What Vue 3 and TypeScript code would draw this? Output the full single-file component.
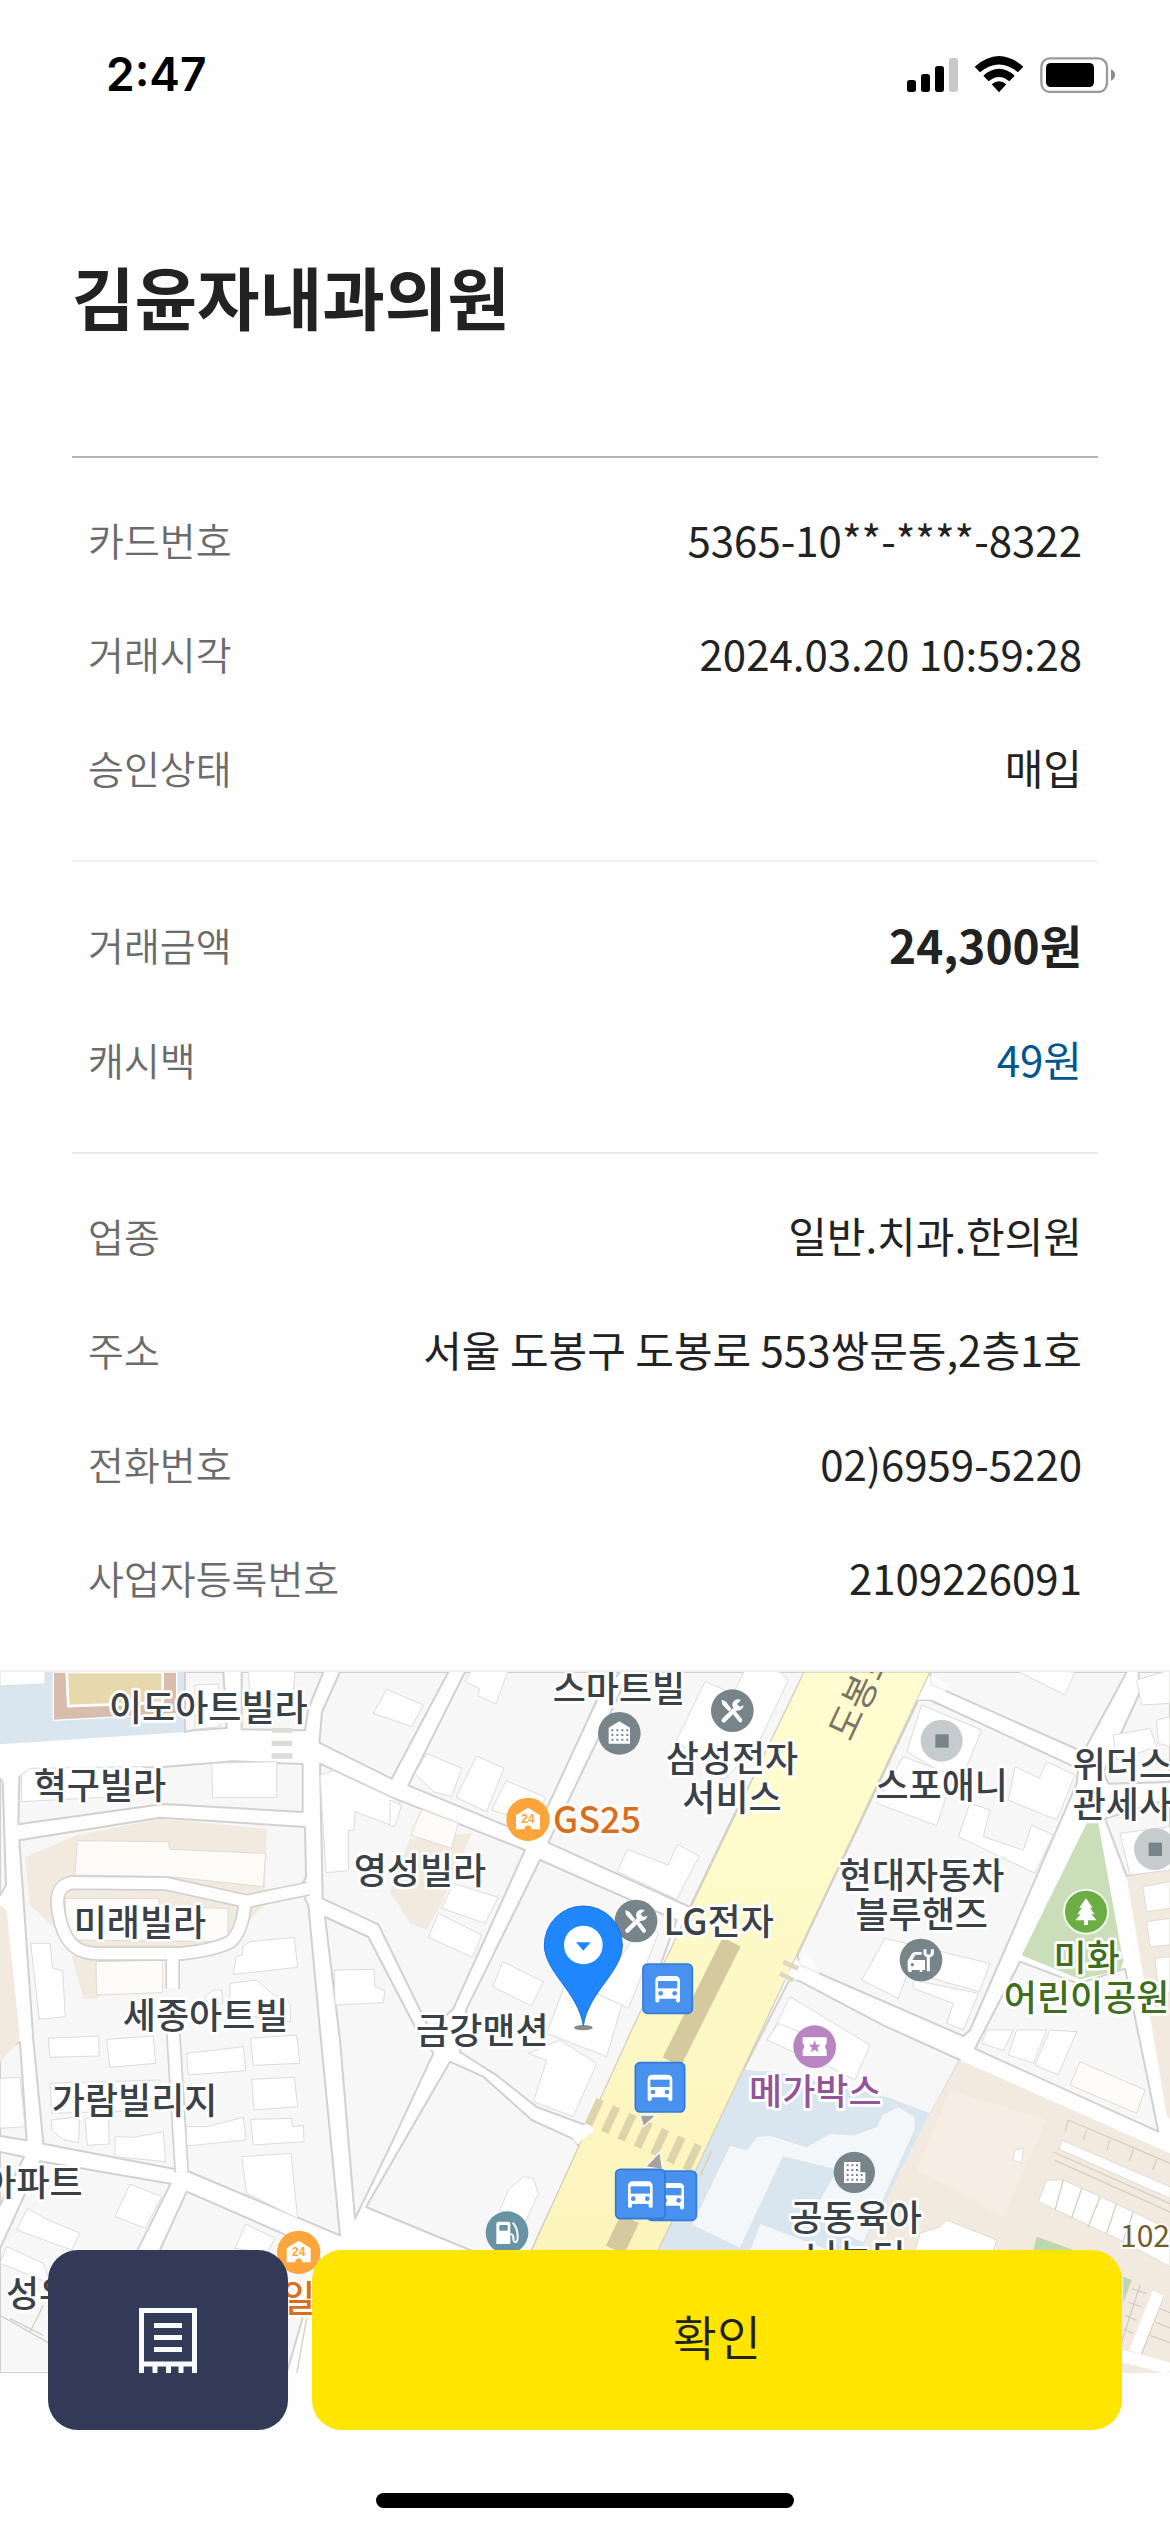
<script setup lang="ts">
interface Row {
  label: string
  value: string
  tone?: 'amount' | 'cashback'
}

interface MapLabel {
  x: number
  y: number
  lines: string[]
  tone?: string
  anchor?: 'start' | 'middle' | 'end'
}

interface Tile {
  x: number
  y: number
  shapes: string[]
}

interface Poi {
  icon: string
  x: number
  y: number
}

const store = '김윤자내과의원'

const sections: Row[][] = [
  [
    { label: '카드번호', value: '5365-10**-****-8322' },
    { label: '거래시각', value: '2024.03.20 10:59:28' },
    { label: '승인상태', value: '매입' },
  ],
  [
    { label: '거래금액', value: '24,300원', tone: 'amount' },
    { label: '캐시백', value: '49원', tone: 'cashback' },
  ],
  [
    { label: '업종', value: '일반.치과.한의원' },
    { label: '주소', value: '서울 도봉구 도봉로 553쌍문동,2층1호' },
    { label: '전화번호', value: '02)6959-5220' },
    { label: '사업자등록번호', value: '2109226091' },
  ],
]

/* City blocks; whatever is left between them reads as road. */
const blocks: string[] = [
  '555,0 670,0 680,168 580,175 555,180',
  '725,0 970,0 925,110 915,175 725,172',
  '0,320 8,330 18,640 0,670',
  '58,315 85,298 490,285 700,268 908,276 908,420 490,396 55,457',
  '58,505 480,437 915,465 918,615 905,640 915,680 925,700 960,1074 1020,1690 570,1500 130,1415 100,1104',
  '1020,0 1345,0 1175,320 958,212 966,120',
  '1395,0 1860,0 1795,75 1640,410 1600,492 1510,458 1225,340',
  '1890,0 2415,0 2370,104 2200,434 2070,705 1645,512',
  '960,275 1170,374 1575,534 1360,1010 1290,1075 1190,870 1135,757 968,680',
  '975,735 1105,795 1250,1074 1300,1144 1170,1424 1065,1640 1020,1104',
  '1620,564 2030,745 1900,1104 1765,1362 1610,1305 1490,1210 1380,1140 1400,1010',
  '1350,1169 1450,1214 1595,1344 1722,1402 1738,1425 1595,1734 1540,1800 1410,1734 1098,1605',
  '0,1140 60,1110 80,1405 0,1392',
  '0,1440 72,1455 0,1600',
  '120,1468 512,1535 400,1760 500,2103 0,2103 0,1730',
  '560,1559 860,1690 960,1760 860,2103 400,2103 480,1734',
  '2790,0 3380,0 3250,240 2795,38',
  '2755,84 2790,84 3235,290 3230,335 2910,1074 2890,1092 2400,879 2392,850',
  '3415,0 3510,0 3510,330 3325,335 3310,300 3420,60',
  '3060,869 3235,935 3375,890 3475,1379 2925,1130',
  '3315,440 3510,380 3510,600 3380,612',
  '2370,920 2400,928 2650,1060 2880,1164 2790,1330 2600,1290 2230,1194',
]

const beige: string[] = [
  '75,555 230,490 480,440 800,470 795,700 640,840 230,830 90,700',
  '215,850 400,870 290,980 250,980',
  '0,700 20,715 60,1104 0,1170',
  '1170,660 1230,500 1415,484 1330,684 1280,774 1230,754',
  '3380,615 3510,590 3510,1340 3500,1330',
  '2880,1164 3510,1444 3510,2103 2500,2103 2570,1734 2700,1500 2790,1324',
]

/* Building footprints, grouped by the tile they belong to. */
const tiles: Tile[] = [
  {
    x: 0,
    y: -36,
    shapes: [
      '0,30 135,30 135,72 0,78',
      '585,75 655,72 660,200 585,208',
      '745,30 885,30 880,95 750,110',
      '1160,88 1270,135 1235,200 1120,160',
      '635,310 830,305 830,412 638,412',
      '65,345 90,325 430,320 440,405 65,425',
      '92,850 150,850 158,925 188,932 196,1070 118,1078',
      '728,860 750,845 883,832 893,922 700,943 708,890 728,885',
      '690,970 770,960 815,1000 870,1030 872,1085 690,1060',
      '615,1010 640,990 665,990 668,1030 615,1030',
      '960,345 1000,332 1200,425 1180,498 1065,455 1062,510 1045,512 1045,632 978,638',
      '1003,930 1122,928 1125,980 1155,992 1150,1028 1005,1035',
    ],
  },
  {
    x: 1170,
    y: -36,
    shapes: [
      '225,65 245,30 355,30 318,132 265,108 268,85',
      '110,280 215,325 185,410 130,395 75,340',
      '260,288 342,325 290,455 198,412',
      '348,362 468,412 430,490 305,450',
      '0,420 35,435 15,498 0,498',
      '190,670 325,712 285,790 155,745',
      '145,760 275,825 248,892 115,832',
      '338,905 460,965 425,1038 308,980',
      '712,568 835,615 862,553 928,588 860,718 682,635',
      '945,65 1030,100 1065,30 1170,36 1195,60 1100,260 1000,360 860,240',
      '760,790 805,820 715,1045 620,1000',
      '530,960 695,1035 650,1190 470,1120',
    ],
  },
  {
    x: 2310,
    y: -36,
    shapes: [
      '455,135 635,210 570,370 410,275',
      '400,290 550,345 500,497 320,430',
      '600,430 660,450 640,530 760,570 785,495 850,525 795,640 565,530',
      '735,320 808,355 830,305 915,345 860,480 715,420',
      '735,30 915,36 885,105',
      '1100,60 1200,30 1200,130 1115,135',
      '1030,225 1140,205 1160,260 1040,300',
      '1160,180 1200,170 1200,260 1165,250',
      '1050,520 1200,500 1200,630 1080,645',
      '1118,680 1200,665 1200,745 1130,755',
      '1130,785 1200,775 1200,855 1140,860',
      '1155,895 1200,890 1200,1000 1165,990',
      '345,835 660,910 628,995 415,935 385,1015 275,960',
      '430,960 625,1000 580,1110 530,1090 550,1030 430,985',
      '60,1010 300,1155 255,1260 0,1130',
    ],
  },
  {
    x: 0,
    y: 1074,
    shapes: [
      '145,25 295,18 298,78 150,82',
      '320,28 460,18 467,100 330,112',
      '560,70 730,50 737,122 565,135',
      '752,25 890,15 900,100 760,106',
      '755,148 883,142 893,230 762,240',
      '557,290 620,290 730,262 738,330 560,348',
      '752,268 875,265 877,290 910,287 912,335 760,345',
      '150,160 480,150 482,240 155,250',
      '155,270 238,260 236,338 190,330 155,300',
      '255,265 325,262 328,342 262,346',
      '345,320 400,322 490,305 497,395 345,380',
      '725,380 873,370 893,565 740,490',
      '390,462 485,500 435,595 345,560',
      '82,535 145,570 240,610 215,660 50,600',
      '20,650 130,700 150,760 0,700',
      '738,582 825,625 800,670 705,655',
      '0,145 60,142 75,290 0,295',
    ],
  },
  {
    x: 1170,
    y: 1074,
    shapes: [
      '470,92 415,70 510,30 620,100 550,260 430,215',
      '400,440 430,445 445,490 405,580 330,540 355,480',
      '1165,-20 1240,10 1220,70 1130,30',
    ],
  },
  {
    x: 2310,
    y: 1074,
    shapes: [
      '530,570 680,630 665,680 430,680 450,610 510,590',
      '650,0 730,0 700,62 635,40',
      '740,0 830,0 790,100 715,75',
      '840,0 920,5 865,135 795,105',
      '735,360 760,355 755,400 728,390',
      '875,330 1200,470 1200,505 868,358',
      '830,450 880,450 1090,545 1200,600 1200,710 1050,630 805,515',
    ],
  },
]

const labels: MapLabel[] = [
  { x: 625, y: 147, lines: ['이도아트빌라'] },
  { x: 300, y: 380, lines: ['혁구빌라'] },
  { x: 420, y: 792, lines: ['미래빌라'] },
  { x: 617, y: 1070, lines: ['세종아트빌'] },
  { x: 1260, y: 635, lines: ['영성빌라'] },
  { x: 1857, y: 90, lines: ['스마트빌'] },
  { x: 2196, y: 299, lines: ['삼성전자', '서비스'] },
  { x: 1791, y: 484, lines: ['GS25'], tone: 'orange' },
  { x: 2156, y: 788, lines: ['LG전자'] },
  { x: 1447, y: 1115, lines: ['금강맨션'] },
  { x: 2825, y: 382, lines: ['스포애니'] },
  { x: 2765, y: 650, lines: ['현대자동차', '블루핸즈'] },
  { x: 3218, y: 319, lines: ['위더스', '관세사'], anchor: 'start' },
  { x: 3260, y: 898, lines: ['미화', '어린이공원'], tone: 'green' },
  { x: 404, y: 1325, lines: ['가람빌리지'] },
  { x: 248, y: 1571, lines: ['아파트'], anchor: 'end' },
  { x: 18, y: 1904, lines: ['성우'], anchor: 'start' },
  { x: 896, y: 1921, lines: ['일'], tone: 'orange' },
  { x: 2446, y: 1300, lines: ['메가박스'], tone: 'purple' },
  { x: 2567, y: 1678, lines: ['공동육아', '나눔터'] },
]

const pois: Poi[] = [
  { icon: 'house', x: 1858, y: 184 },
  { icon: 'tools', x: 2197, y: 116 },
  { icon: 'store', x: 1584, y: 442 },
  { icon: 'tools', x: 1908, y: 747 },
  { icon: 'place', x: 2825, y: 206 },
  { icon: 'place', x: 3465, y: 531 },
  { icon: 'garage', x: 2763, y: 864 },
  { icon: 'tree', x: 3258, y: 719 },
  { icon: 'ticket', x: 2444, y: 1124 },
  { icon: 'office', x: 2563, y: 1501 },
  { icon: 'fuel', x: 1521, y: 1682 },
  { icon: 'store', x: 896, y: 1741 },
  { icon: 'bus', x: 2003, y: 950 },
  { icon: 'bus', x: 1980, y: 1246 },
  { icon: 'bus', x: 2015, y: 1571 },
  { icon: 'bus', x: 1921, y: 1566 },
]

const loopRoad =
  'M925,650 L740,688 L500,635 L215,632 Q172,640 172,690 Q180,790 225,825 Q250,845 300,845 L540,845 Q640,835 690,810 Q728,780 735,690 M518,850 V950'
const sideRoad = 'M520,1085 L545,1500'
const terraceLines =
  'M880,450 L855,540 M935,475 L905,565 M990,500 L955,590 M1040,520 L1010,610 M1090,545 L1060,632 M950,300 L940,330 M1020,330 L1010,362 M1090,358 L1078,392 M1160,388 L1148,420'
</script>

<template>
  <div class="screen">
    <header class="status">
      <span class="time">2:47</span>
      <svg class="signals" viewBox="78 72 630 114" aria-hidden="true">
        <rect x="81" y="147" width="27" height="36" rx="8" />
        <rect x="123" y="129" width="27" height="54" rx="8" />
        <rect x="165" y="105" width="27" height="78" rx="8" />
        <rect x="207" y="81" width="27" height="102" rx="8" fill="#c9c9c9" />
        <path d="M284,107 Q357,43 430,107 L414,124 Q357,77 300,124 Z" />
        <path d="M310,134 Q357,93 404,134 L388,151 Q357,125 326,151 Z" />
        <path d="M335,160 Q357,141 379,160 L357,184 Z" />
        <rect x="484" y="82" width="197" height="101" rx="26" fill="none" stroke="#9b9b9b" stroke-width="7" />
        <rect x="498" y="96" width="144" height="72" rx="14" />
        <path d="M693,115 Q705,120 705,132 Q705,144 693,149 Z" fill="#8c8c8c" />
      </svg>
    </header>

    <main>
      <h1 class="title">{{ store }}</h1>

      <dl v-for="(rows, i) in sections" :key="i" class="section">
        <div v-for="row in rows" :key="row.label" class="row" :class="row.tone">
          <dt>{{ row.label }}</dt>
          <dd>{{ row.value }}</dd>
        </div>
      </dl>

      <svg class="map" viewBox="0 0 3510 2103" role="img" aria-label="가맹점 위치 지도">
        <defs>
          <linearGradient id="avenue" x1="0" y1="0" x2="0" y2="1">
            <stop offset="0" stop-color="#fffdd0" />
            <stop offset="1" stop-color="#fbf2b8" />
          </linearGradient>

          <g id="wrench">
            <path d="M-26,29 L14,-10" stroke="#fff" stroke-width="13" stroke-linecap="round" />
            <path d="M26,-32 A17,17 0 1 0 34,-16 L22,-12 L14,-20 Z" fill="#fff" />
          </g>

          <g id="tools">
            <circle r="64" fill="#77858a" />
            <use href="#wrench" />
            <path d="M-31,-31 L-20,-26 L-4,-5 L-10,1 L-28,-18 Z M7,6 L27,30" fill="#fff" stroke="#fff" stroke-width="3" />
            <path d="M9,10 L24,29" stroke="#fff" stroke-width="12" stroke-linecap="round" />
          </g>

          <g id="house">
            <circle r="64" fill="#77858a" />
            <path d="M-32,31 V-17 L0,-36 L32,-17 V31 Z" fill="#fff" />
            <path
              d="M-24,-9 H30 M-24,5 H30 M-24,19 H30"
              stroke="#77858a"
              stroke-width="6"
              stroke-dasharray="6 9"
            />
          </g>

          <g id="office">
            <circle r="62" fill="#77858a" />
            <path d="M-31,32 V-31 H18 V0 H33 V32 Z" fill="#fff" />
            <path
              d="M-23,-21 H14 M-23,-7 H14 M-23,8 H28 M-23,22 H28"
              stroke="#77858a"
              stroke-width="6"
              stroke-dasharray="6 8"
            />
          </g>

          <g id="store">
            <circle r="65" fill="#fba53b" />
            <path d="M-36,30 V-12 L-8,-30 Q0,-36 8,-30 L36,-12 V30 Z" fill="#fff" />
            <path d="M-10,35 V24 Q0,12 10,24 V35 Z" fill="#fba53b" />
            <text class="hours" x="0" y="12">24</text>
          </g>

          <g id="place">
            <circle r="63" fill="#c6cbce" />
            <rect x="-19" y="-19" width="40" height="40" fill="#77858a" />
          </g>

          <g id="garage">
            <circle r="64" fill="#77858a" />
            <path
              d="M-40,30 V2 L-28,-18 Q-24,-24 -16,-24 H2 V-16 H-16 L-26,0 H12 V30 H4 V36 H-4 V30 H-28 V36 H-38 V30 Z"
              fill="#fff"
            />
            <circle cx="-26" cy="14" r="5" fill="#77858a" />
            <path d="M22,34 V-8 M12,-32 V-18 Q22,-4 34,-18 V-32" stroke="#fff" stroke-width="9" fill="none" />
          </g>

          <g id="tree">
            <circle r="66" fill="#6cae45" stroke="#f2f8ec" stroke-width="6" />
            <path d="M0,-40 L20,-12 H12 L26,8 H16 L32,26 H6 V40 H-6 V26 H-32 L-16,8 H-26 L-12,-12 H-20 Z" fill="#fff" />
          </g>

          <g id="ticket">
            <circle r="64" fill="#b884c1" />
            <path d="M-36,-28 H36 V-10 Q26,0 36,10 V28 H-36 V10 Q-26,0 -36,-10 Z" fill="#fff" />
            <path
              d="M0,-19 L5,-6 L18,-6 L8,3 L12,17 L0,9 L-12,17 L-8,3 L-18,-6 L-5,-6 Z"
              fill="#b884c1"
            />
          </g>

          <g id="fuel">
            <circle r="64" fill="#6893a2" />
            <path d="M-32,34 V-26 Q-32,-33 -25,-33 H3 Q10,-33 10,-26 V34 Z" fill="#fff" />
            <rect x="-23" y="-23" width="25" height="17" fill="#6893a2" />
            <path d="M10,4 Q20,4 19,18 Q20,30 27,28 Q34,26 31,0 Q28,-20 17,-30" fill="none" stroke="#fff" stroke-width="6" />
          </g>

          <g id="bus">
            <rect x="-74" y="-74" width="148" height="148" rx="14" fill="#4991ee" stroke="#3479d8" stroke-width="5" />
            <path
              d="M-37,30 V-24 Q-37,-38 -22,-38 H22 Q37,-38 37,-24 V30 V38 Q31,45 25,38 V30 H-25 V38 Q-31,45 -37,38 Z"
              fill="#fff"
            />
            <rect x="-29" y="-23" width="58" height="22" fill="#4991ee" />
            <circle cx="-21" cy="14" r="7" fill="#4991ee" />
            <circle cx="21" cy="14" r="7" fill="#4991ee" />
          </g>
        </defs>

        <rect width="3510" height="2103" fill="#fefefe" />
        <path d="M0,0 H555 V180 L0,217 Z" fill="#d9e6f0" />
        <g class="blocks">
          <polygon v-for="points in blocks" :key="points" :points="points" />
        </g>
        <g class="beige">
          <polygon v-for="points in beige" :key="points" :points="points" />
        </g>
        <polygon points="160,0 530,0 530,125 160,145" fill="#d8bdac" stroke="#fff" stroke-width="4" />
        <polygon points="200,0 488,0 488,92 205,102" fill="#e8d8ae" stroke="#fff" stroke-width="8" />
        <polygon points="2850,1254 3140,1344 3010,1634 2750,1494" fill="#f5eee4" />
        <polygon
          points="2230,1194 2330,1200 2660,1274 2790,1324 2700,1500 2570,1760 1960,1760 2100,1434"
          fill="#dae6ef"
        />
        <polygon points="3260,454 3295,454 3370,870 3360,895 3240,922 3065,850" fill="#cbdeba" />
        <path d="M3110,1694 L3220,1734 H3100 Z M3370,1814 L3395,1824 L3370,1894 Z" fill="#bcd8ac" />

        <g class="park-buildings">
          <polygon points="232,506 505,509 510,532 797,544 790,644 510,614 225,609" />
          <polygon points="195,679 475,679 480,704 685,709 683,809 200,804" />
          <polygon points="288,869 488,864 488,962 290,969" />
          <polygon points="1265,412 1375,454 1355,529 1232,489" />
          <polygon points="3240,1169 3435,1254 3410,1324 3210,1239" />
        </g>
        <g class="school">
          <polygon points="2190,1419 2240,1434 2270,1394 2310,1390 2420,1424 2490,1384 2560,1389 2630,1364 2645,1329 2695,1304 2745,1334 2745,1374 2590,1714 2430,1634 2510,1494 2350,1454 2220,1729 2075,1659" />
          <polygon points="2280,1654 2490,1734 2240,1760" />
        </g>

        <g class="buildings">
          <g v-for="(tile, i) in tiles" :key="i" :transform="`translate(${tile.x} ${tile.y})`">
            <polygon v-for="points in tile.shapes" :key="points" :points="points" />
          </g>
        </g>
        <path :d="terraceLines" transform="translate(2310 1074)" class="thin" />
        <path d="M3205,1344 L3510,1474 M3195,1379 L3205,1344 M3160,1440 L3510,1595 M3165,1465 L3510,1620" class="thin" />
        <path d="M3420,1839 L3365,2010 M3395,1850 L3440,1865 M3385,1890 L3425,1905 M3375,1930 L3410,1945 M3370,1970 L3400,1985 M3490,1874 L3425,2045 M3480,1910 L3510,1922 M3465,1950 L3510,1968 M3450,1990 L3510,2012" class="thin" />
        <path d="M3475,1864 L3405,2040 M3360,2050 L3510,2090" stroke="#fff" stroke-width="36" />
        <path d="M30,1940 L130,1990 M130,1900 L90,1980 M0,1930 L150,2015 M920,1939 L890,2103" class="thin" />

        <path :d="loopRoad" class="road-edge" />
        <path :d="sideRoad" class="road-edge" />
        <path :d="loopRoad" class="road" />
        <path :d="sideRoad" class="road" />

        <path
          d="M2412,0 H2790 L2390,850 L2285,1074 L1975,1734 L1800,2103 H1420 L1595,1734 L1895,1074 Z"
          fill="url(#avenue)"
          stroke="#d6d0bd"
          stroke-width="4"
        />
        <path d="M2750,84 L2815,84 L2850,38 L2790,10 Z M2420,840 L2460,905 L2400,925 L2340,925 Z" fill="#fefefe" opacity="0.7" />
        <path d="M1722,1404 L1774,1362" stroke="#fefefe" stroke-width="30" />
        <path d="M2195,810 L2015,1170 M1890,1640 L1845,1734" stroke="#d5c99f" stroke-width="60" fill="none" />
        <path d="M1772,1315 L2120,1476" stroke="#ddd4ac" stroke-width="84" stroke-dasharray="24 30" />
        <path d="M1920,1329 H1970 L1930,1364 Z M1935,1485 L1980,1440 L1988,1492 Z" fill="#a8a09a" stroke="#fff" stroke-width="4" />
        <path d="M815,206 H877 V222 H815 Z M815,244 H877 V260 H815 Z M815,168 H877 V182 H815 Z" fill="#dcdbd8" />
        <path d="M2350,870 L2395,890 M2340,905 L2380,925" stroke="#ddd8c4" stroke-width="14" />

        <text class="street" transform="translate(2553 212) rotate(-65)">도봉로</text>
        <text class="unit" x="3360" y="1724">102</text>

        <use v-for="(poi, i) in pois" :key="i" :href="`#${poi.icon}`" :x="poi.x" :y="poi.y" />

        <text
          v-for="label in labels"
          :key="label.lines[0]"
          class="label"
          :class="label.tone"
          :text-anchor="label.anchor ?? 'middle'"
        >
          <tspan v-for="(line, i) in label.lines" :key="line" :x="label.x" :y="label.y + i * 118">{{ line }}</tspan>
        </text>

        <ellipse cx="1750" cy="1067" rx="28" ry="8" fill="#8a8a8a" />
        <path
          d="M1750,1061 C1735,960 1633,900 1633,819 A117,117 0 0 1 1867,819 C1867,900 1765,960 1750,1061 Z"
          fill="#1f87fb"
          stroke="#1971dc"
          stroke-width="3"
        />
        <circle cx="1750" cy="819" r="58" fill="#fff" />
        <path d="M1728,811 H1772 L1750,836 Z" fill="#1f87fb" />
      </svg>
    </main>

    <footer class="bottom">
      <div class="actions">
        <button type="button" class="receipt" aria-label="영수증">
          <svg viewBox="0 0 58 65" aria-hidden="true">
            <path
              d="M2.5,65 V2.5 H55.5 V65 M0,56 H58 M16,56 V65 M29.5,56 V65 M42,56 V65 M15,17.5 H43 M15,29.5 H43 M15,41.5 H43"
              fill="none"
              stroke="#f7fbfe"
              stroke-width="5"
            />
          </svg>
        </button>
        <button type="button" class="confirm">확인</button>
      </div>
      <div class="home-indicator"></div>
    </footer>
  </div>
</template>

<style>
body {
  margin: 0;
  background: #fefefe;
}
</style>

<style scoped>
.screen {
  min-height: 100vh;
  background: #fefefe;
  color: #222;
  font-family: 'Noto Sans CJK KR', 'Noto Sans', sans-serif;
}

.status {
  display: flex;
  align-items: center;
  justify-content: space-between;
  height: 148px;
  padding: 0 54px 0 106px;
}

.time {
  color: #000;
  font-family: Inter, sans-serif;
  font-size: 46px;
  font-weight: 600;
  line-height: 56px;
}

.signals {
  width: 210px;
  height: 38px;
}

.title {
  margin: 0 72px;
  padding: 108px 0 120px;
  border-bottom: 2px solid #b2b2b2;
  font-size: 68px;
  font-weight: 700;
  line-height: 80px;
}

.section {
  margin: 0 72px;
  padding: 24px 16px 36px;
  border-bottom: 2px solid #e8e8e8;
}

.section:first-of-type {
  border-bottom-color: #f1f1f1;
}

.section:last-of-type {
  border-bottom: 0;
}

.row {
  display: flex;
  align-items: center;
  justify-content: space-between;
  gap: 24px;
  min-height: 114px;
}

dt {
  color: #6b6b6b;
  font-size: 39px;
  font-weight: 350;
  line-height: 56px;
}

dd {
  margin: 0;
  font-size: 42px;
  font-weight: 400;
  line-height: 60px;
  text-align: right;
}

.amount {
  min-height: 116px;
}

.amount dd {
  font-size: 46px;
  font-weight: 700;
}

.cashback dd {
  color: #00568f;
}

.map {
  display: block;
  width: 100%;
  border-top: 2px solid #f0f0f0;
}

.blocks polygon {
  fill: #f7f7f7;
  stroke: #d2d1d0;
  stroke-width: 6;
  stroke-linejoin: round;
}

.beige polygon {
  fill: #f2eadf;
}

.buildings polygon {
  fill: #fefefe;
  stroke: #dddcdb;
  stroke-width: 3;
}

.park-buildings polygon {
  fill: #fdfbf8;
  stroke: #e2dbd2;
  stroke-width: 3;
}

.school polygon {
  fill: #f4f7fa;
  stroke: #dde3e9;
  stroke-width: 3;
}

.thin {
  fill: none;
  stroke: #d6cec4;
  stroke-width: 4;
}

.road,
.road-edge {
  fill: none;
  stroke-linejoin: round;
}

.road {
  stroke: #fefefe;
  stroke-width: 34;
}

.road-edge {
  stroke: #d2d1d0;
  stroke-width: 44;
}

.label {
  fill: #3b4247;
  stroke: #fff;
  stroke-width: 16;
  stroke-linejoin: round;
  paint-order: stroke;
  font-size: 108px;
  font-weight: 500;
}

.label.orange {
  fill: #d96f1b;
}

.label.green {
  fill: #3f6f1e;
}

.label.purple {
  fill: #935499;
}

.street {
  fill: #7c7266;
  font-size: 108px;
  font-weight: 400;
}

.unit {
  fill: #705c2c;
  stroke: #fff;
  stroke-width: 10;
  paint-order: stroke;
  font-size: 90px;
}

.hours {
  fill: #fba53b;
  font-family: 'Liberation Sans', sans-serif;
  font-size: 36px;
  font-weight: 700;
  text-anchor: middle;
}

.bottom {
  position: fixed;
  right: 0;
  bottom: 0;
  left: 0;
}

.actions {
  display: flex;
  gap: 24px;
  padding: 0 48px;
}

.actions button {
  height: 180px;
  border: 0;
  border-radius: 30px;
  font-family: inherit;
}

.receipt {
  display: flex;
  flex: 0 0 240px;
  align-items: center;
  justify-content: center;
  background: #333a58;
}

.receipt svg {
  width: 58px;
  height: 65px;
}

.confirm {
  flex: 1;
  padding: 0 0 10px;
  background: #ffe500;
  color: #222;
  font-size: 48px;
  font-weight: 350;
}

.home-indicator {
  width: 418px;
  max-width: 50%;
  height: 15px;
  margin: 63px auto 24px;
  border-radius: 8px;
  background: #000;
}
</style>
